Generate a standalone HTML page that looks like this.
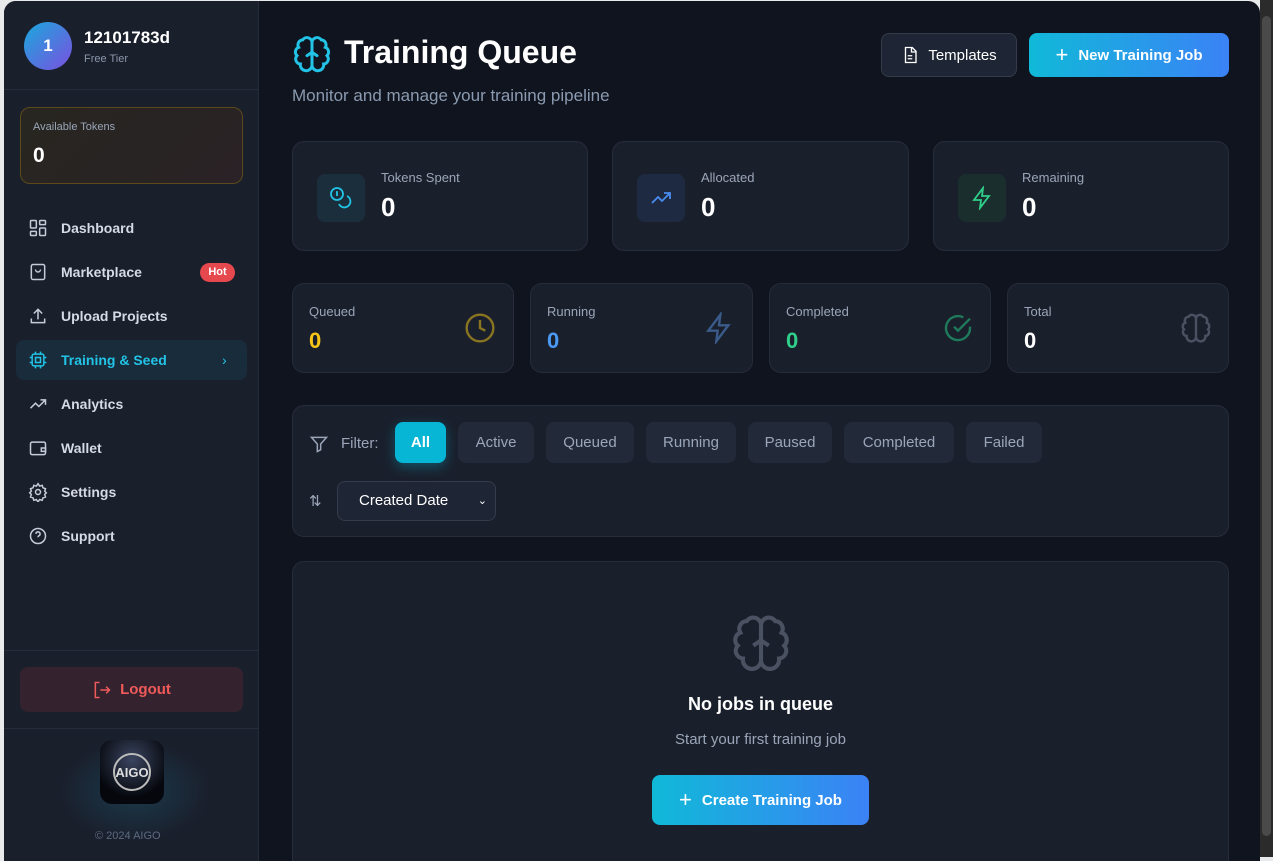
<!DOCTYPE html><html><head><meta charset="utf-8"><style>
*{box-sizing:border-box;margin:0;padding:0}
body{width:1273px;height:857px;background:#e9eaec;font-family:"Liberation Sans",sans-serif;overflow:hidden;position:relative}
.app{position:absolute;left:4px;top:1px;width:1256px;height:860px;background:#10141e;border-radius:12px 12px 0 0;overflow:hidden}
.sb{position:absolute;left:0;top:0;width:255px;height:860px;background:#1a1f2c;border-right:1px solid #252b38}
.a{position:absolute}
.txt{color:#fff}
.nav{position:absolute;left:24px;font-size:14px;font-weight:bold;color:#d5dae4;display:flex;align-items:center;gap:13px}
.nav svg{width:20px;height:20px}
.card{position:absolute;background:#1a1f2c;border:1px solid #262c3a;border-radius:12px}
.lbl{font-size:13px;color:#9aa6b8}
.big{font-size:26px;font-weight:bold;color:#fff}
.fb{position:absolute;top:16px;height:41px;border-radius:8px;background:#222a3a;color:#9aa6b8;font-size:15px;display:flex;align-items:center;justify-content:center}
.scroll{position:absolute;left:1260px;top:0;width:13px;height:857px;background:#2b2b2b}
</style></head><body>
<div class="app">
<div class="sb">
 <div class="a" style="left:20px;top:21px;width:48px;height:48px;border-radius:50%;background:linear-gradient(135deg,#1aa9dc,#7b4fe0);color:#fff;font-weight:bold;font-size:17px;display:flex;align-items:center;justify-content:center">1</div>
 <div class="a txt" style="left:80px;top:27px;font-size:17px;font-weight:bold">12101783d</div>
 <div class="a" style="left:80px;top:52px;font-size:11px;color:#8a96aa">Free Tier</div>
 <div class="a" style="left:0;top:88px;width:255px;height:1px;background:#262c3a"></div>
 <div class="a" style="left:16px;top:106px;width:223px;height:77px;border-radius:10px;border:1px solid #5c4a1c;background:linear-gradient(135deg,#272620,#2a2226)">
  <div class="a" style="left:12px;top:13px;font-size:11px;color:#9aa6b8">Available Tokens</div>
  <div class="a txt" style="left:12px;top:36px;font-size:21px;font-weight:bold">0</div></div>
 <div class="nav" style="top:217px"><svg viewBox="0 0 24 24" fill="none" stroke="#c5ccd8" stroke-width="1.8"><rect x="3" y="3" width="7" height="9" rx="1"/><rect x="14" y="3" width="7" height="5" rx="1"/><rect x="14" y="12" width="7" height="9" rx="1"/><rect x="3" y="16" width="7" height="5" rx="1"/></svg>Dashboard</div>
 <div class="nav" style="top:261px"><svg viewBox="0 0 24 24" fill="none" stroke="#c5ccd8" stroke-width="1.8"><rect x="4" y="3" width="16" height="18" rx="2"/><path d="M9 9a3 3 0 0 0 6 0"/></svg>Marketplace</div>
 <div class="a" style="left:196px;top:262px;width:35px;height:19px;border-radius:10px;background:#e5484d;color:#fff;font-size:11px;font-weight:bold;text-align:center;line-height:19px">Hot</div>
 <div class="nav" style="top:305px"><svg viewBox="0 0 24 24" fill="none" stroke="#c5ccd8" stroke-width="1.8"><path d="M4 15v5h16v-5M12 4v12M7 9l5-5 5 5"/></svg>Upload Projects</div>
 <div class="a" style="left:12px;top:339px;width:231px;height:40px;border-radius:8px;background:#182c3b"></div>
 <div class="nav" style="top:349px;color:#22c3e6"><svg viewBox="0 0 24 24" fill="none" stroke="#22c3e6" stroke-width="1.8"><rect x="5" y="5" width="14" height="14" rx="2"/><rect x="9" y="9" width="6" height="6"/><path d="M9 2v3M15 2v3M9 19v3M15 19v3M2 9h3M2 15h3M19 9h3M19 15h3"/></svg>Training &amp; Seed</div>
 <div class="a" style="left:218px;top:351px;color:#22c3e6;font-size:14px">›</div>
 <div class="nav" style="top:393px"><svg viewBox="0 0 24 24" fill="none" stroke="#c5ccd8" stroke-width="1.8"><path d="M3 17l6-6 4 4 8-8M15 7h6v6"/></svg>Analytics</div>
 <div class="nav" style="top:437px"><svg viewBox="0 0 24 24" fill="none" stroke="#c5ccd8" stroke-width="1.8"><rect x="3" y="5" width="18" height="15" rx="2"/><path d="M16 12h5v4h-5z"/></svg>Wallet</div>
 <div class="nav" style="top:481px"><svg viewBox="0 0 24 24" fill="none" stroke="#c5ccd8" stroke-width="1.8"><circle cx="12" cy="12" r="3"/><path d="M12 2l2 3 3-1 1 3 3 1-1 3 2 2-2 2 1 3-3 1-1 3-3-1-2 3-2-3-3 1-1-3-3-1 1-3-2-2 2-2-1-3 3-1 1-3 3 1z"/></svg>Settings</div>
 <div class="nav" style="top:525px"><svg viewBox="0 0 24 24" fill="none" stroke="#c5ccd8" stroke-width="1.8"><circle cx="12" cy="12" r="9"/><path d="M9.5 9.5a2.5 2.5 0 1 1 3.5 2.3c-.7.4-1 .9-1 1.7M12 17h.01"/></svg>Support</div>
 <div class="a" style="left:0;top:649px;width:255px;height:1px;background:#262c3a"></div>
 <div class="a" style="left:16px;top:666px;width:223px;height:45px;border-radius:8px;background:#34232e;color:#f05a5a;font-size:15px;font-weight:bold;display:flex;align-items:center;justify-content:center;gap:8px"><svg width="20" height="20" viewBox="0 0 24 24" fill="none" stroke="#f05a5a" stroke-width="1.8"><path d="M9 3H4v18h5M10 12h11M17 8l4 4-4 4"/></svg>Logout</div>
 <div class="a" style="left:0;top:727px;width:255px;height:1px;background:#262c3a"></div>
 <div class="a" style="left:56px;top:740px;width:150px;height:100px;background:radial-gradient(closest-side,#1b3a4c,transparent)"></div>
 <div class="a" style="left:96px;top:739px;width:64px;height:64px;border-radius:12px;background:radial-gradient(circle at 50% 30%,#3a4560,#05070c 70%);display:flex;align-items:center;justify-content:center"><div style="width:38px;height:38px;border-radius:50%;border:2px solid #bbb;color:#ddd;font-size:13px;font-weight:bold;display:flex;align-items:center;justify-content:center">AIGO</div></div>
 <div class="a" style="left:91px;top:829px;font-size:11px;color:#5d6a80">© 2024 AIGO</div>
</div>
<!-- main -->
<svg class="a" style="left:288px;top:33px" width="40" height="40" viewBox="0 0 24 24" fill="none" stroke="#22c3e6" stroke-width="1.8" stroke-linecap="round"><path d="M12 5a3 3 0 0 0-5.5-1.5A3 3 0 0 0 4 8a3 3 0 0 0-1 5 3 3 0 0 0 2 5 3 3 0 0 0 7 1zM12 5a3 3 0 0 1 5.5-1.5A3 3 0 0 1 20 8a3 3 0 0 1 1 5 3 3 0 0 1-2 5 3 3 0 0 1-7 1zM12 5v14M9 13l3-2 3 2"/></svg>
<div class="a txt" style="left:340px;top:33px;font-size:32px;font-weight:bold">Training Queue</div>
<div class="a" style="left:288px;top:85px;font-size:17px;color:#8a9ab0">Monitor and manage your training pipeline</div>
<div class="a" style="left:877px;top:32px;width:136px;height:44px;border-radius:8px;background:#1e2534;border:1px solid #343c4c;color:#fff;font-size:15px;display:flex;align-items:center;justify-content:center;gap:9px"><svg width="18" height="18" viewBox="0 0 24 24" fill="none" stroke="#fff" stroke-width="1.8"><path d="M6 2h9l5 5v15H6z M14 2v6h6M9 13h6M9 17h6"/></svg>Templates</div>
<div class="a" style="left:1025px;top:32px;width:200px;height:44px;border-radius:8px;background:linear-gradient(90deg,#10b9d8,#3b82f6);color:#fff;font-size:15px;font-weight:bold;display:flex;align-items:center;justify-content:center;gap:10px"><span style="font-size:22px;font-weight:normal">+</span>New Training Job</div>

<div class="card" style="left:288px;top:140px;width:296px;height:110px"><div class="a" style="left:24px;top:32px;width:48px;height:48px;border-radius:8px;background:#1a2e3c"><svg style="margin:12px" width="24" height="24" viewBox="0 0 24 24" fill="none" stroke="#22c3e6" stroke-width="1.8"><circle cx="8" cy="8" r="6"/><path d="M18 10a6 6 0 1 1-8 8M7 6h1v4"/></svg></div><div class="a lbl" style="left:88px;top:28px">Tokens Spent</div><div class="a big" style="left:88px;top:50px">0</div></div>
<div class="card" style="left:608px;top:140px;width:297px;height:110px"><div class="a" style="left:24px;top:32px;width:48px;height:48px;border-radius:8px;background:#1e2942"><svg style="margin:12px" width="24" height="24" viewBox="0 0 24 24" fill="none" stroke="#4a8df0" stroke-width="1.8"><path d="M3 17l6-6 4 4 8-8M15 7h6v6"/></svg></div><div class="a lbl" style="left:88px;top:28px">Allocated</div><div class="a big" style="left:88px;top:50px">0</div></div>
<div class="card" style="left:929px;top:140px;width:296px;height:110px"><div class="a" style="left:24px;top:32px;width:48px;height:48px;border-radius:8px;background:#1a2e2e"><svg style="margin:12px" width="24" height="24" viewBox="0 0 24 24" fill="none" stroke="#2fcf8a" stroke-width="1.8"><path d="M13 2L4 14h7l-1 8 9-12h-7z"/></svg></div><div class="a lbl" style="left:88px;top:28px">Remaining</div><div class="a big" style="left:88px;top:50px">0</div></div>

<div class="card" style="left:288px;top:282px;width:222px;height:90px"><div class="a lbl" style="left:16px;top:20px">Queued</div><div class="a" style="left:16px;top:44px;font-size:22px;font-weight:bold;color:#f5c518">0</div><svg class="a" style="left:171px;top:28px" width="32" height="32" viewBox="0 0 24 24" fill="none" stroke="#8a7420" stroke-width="1.8"><circle cx="12" cy="12" r="10"/><path d="M12 6v6l4 2"/></svg></div>
<div class="card" style="left:526px;top:282px;width:223px;height:90px"><div class="a lbl" style="left:16px;top:20px">Running</div><div class="a" style="left:16px;top:44px;font-size:22px;font-weight:bold;color:#4a9af5">0</div><svg class="a" style="left:172px;top:28px" width="32" height="32" viewBox="0 0 24 24" fill="none" stroke="#3a5a8a" stroke-width="1.8"><path d="M13 2L4 14h7l-1 8 9-12h-7z"/></svg></div>
<div class="card" style="left:765px;top:282px;width:222px;height:90px"><div class="a lbl" style="left:16px;top:20px">Completed</div><div class="a" style="left:16px;top:44px;font-size:22px;font-weight:bold;color:#2fcf8a">0</div><svg class="a" style="left:172px;top:28px" width="32" height="32" viewBox="0 0 24 24" fill="none" stroke="#1e7a5a" stroke-width="1.8"><path d="M21 11v1a9 9 0 1 1-5-8M9 11l3 3 9-9"/></svg></div>
<div class="card" style="left:1003px;top:282px;width:222px;height:90px"><div class="a lbl" style="left:16px;top:20px">Total</div><div class="a" style="left:16px;top:44px;font-size:22px;font-weight:bold;color:#fff">0</div><svg class="a" style="left:172px;top:28px" width="32" height="32" viewBox="0 0 24 24" fill="none" stroke="#4a5262" stroke-width="1.8"><path d="M12 5a3 3 0 0 0-5.5-1.5A3 3 0 0 0 4 8a3 3 0 0 0-1 5 3 3 0 0 0 2 5 3 3 0 0 0 7 1zM12 5a3 3 0 0 1 5.5-1.5A3 3 0 0 1 20 8a3 3 0 0 1 1 5 3 3 0 0 1-2 5 3 3 0 0 1-7 1zM12 5v14"/></svg></div>

<div class="card" style="left:288px;top:404px;width:937px;height:132px">
 <svg class="a" style="left:16px;top:28px" width="20" height="20" viewBox="0 0 24 24" fill="none" stroke="#9aa6b8" stroke-width="1.8"><path d="M3 4h18l-7 8v7l-4 2v-9z"/></svg>
 <div class="a" style="left:48px;top:29px;font-size:15px;color:#9aa6b8">Filter:</div>
 <div class="fb" style="left:102px;width:51px;background:#06b6d4;color:#fff;font-weight:bold;box-shadow:0 4px 12px rgba(6,182,212,.35)">All</div>
 <div class="fb" style="left:165px;width:76px">Active</div>
 <div class="fb" style="left:253px;width:88px">Queued</div>
 <div class="fb" style="left:353px;width:90px">Running</div>
 <div class="fb" style="left:455px;width:84px">Paused</div>
 <div class="fb" style="left:551px;width:110px">Completed</div>
 <div class="fb" style="left:673px;width:76px">Failed</div>
 <div class="a" style="left:16px;top:86px;font-size:15px;color:#9aa6b8">⇅</div>
 <div class="a" style="left:44px;top:75px;width:159px;height:40px;border-radius:8px;background:#1e2534;border:1px solid #343c4c;color:#fff;font-size:15px;padding-left:21px;line-height:38px">Created Date<span style="position:absolute;right:8px;top:0;font-size:11px">&#8964;</span></div>
</div>

<div class="card" style="left:288px;top:560px;width:937px;height:320px">
 <svg class="a" style="left:437px;top:50px" width="62" height="62" viewBox="0 0 24 24" fill="none" stroke="#4a5262" stroke-width="1.6"><path d="M12 5a3 3 0 0 0-5.5-1.5A3 3 0 0 0 4 8a3 3 0 0 0-1 5 3 3 0 0 0 2 5 3 3 0 0 0 7 1zM12 5a3 3 0 0 1 5.5-1.5A3 3 0 0 1 20 8a3 3 0 0 1 1 5 3 3 0 0 1-2 5 3 3 0 0 1-7 1zM12 5v14M9 13l3-2 3 2"/></svg>
 <div class="a txt" style="left:0;width:935px;text-align:center;top:132px;font-size:18px;font-weight:bold">No jobs in queue</div>
 <div class="a" style="left:0;width:935px;text-align:center;top:169px;font-size:15px;color:#9aa6b8">Start your first training job</div>
 <div class="a" style="left:359px;top:213px;width:217px;height:50px;border-radius:8px;background:linear-gradient(90deg,#10b9d8,#3b82f6);color:#fff;font-size:15px;font-weight:bold;display:flex;align-items:center;justify-content:center;gap:10px"><span style="font-size:22px;font-weight:normal">+</span>Create Training Job</div>
</div>
</div>
<div class="scroll"><div style="position:absolute;left:2px;top:16px;width:9px;height:820px;border-radius:5px;background:#4a4a4a"></div></div>
</body></html>
